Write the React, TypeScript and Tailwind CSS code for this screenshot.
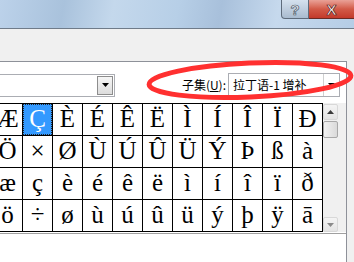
const rows: string[][] = [
  ["Æ", "Ç", "È", "É", "Ê", "Ë", "Ì", "Í", "Î", "Ï", "Ð"],
  ["Ö", "×", "Ø", "Ù", "Ú", "Û", "Ü", "Ý", "Þ", "ß", "à"],
  ["æ", "ç", "è", "é", "ê", "ë", "ì", "í", "î", "ï", "ð"],
  ["ö", "÷", "ø", "ù", "ú", "û", "ü", "ý", "þ", "ÿ", "ā"],
];

const DropArrow = () => (
  <svg width="7" height="4" viewBox="0 0 7 4">
    <path d="M0 0h7L3.5 4z" fill="#000" />
  </svg>
);

const SymbolGrid = () => (
  <div className="flex -ml-[8px] border-b border-[#a0a0a0] pb-px">
    <div className="border-t border-l border-black">
      {rows.map((row, r) => (
        <div key={r} className="flex">
          {row.map((ch, c) => {
            const selected = r === 0 && c === 1;
            return (
              <div
                key={c}
                className="w-[30px] h-[32px] border-r border-b border-black flex items-center justify-center pb-[2px]"
              >
                {selected ? (
                  <div className="w-[29px] h-[31px] -mb-[2px] pb-[2px] bg-[#3399ff] border border-dotted border-[#222] flex items-center justify-center text-white">
                    {ch}
                  </div>
                ) : (
                  ch
                )}
              </div>
            );
          })}
        </div>
      ))}
    </div>
    {/* scrollbar */}
    <div className="w-[15px] flex flex-col bg-[#f0f0f0]">
      <div className="h-[16px] mt-px flex items-center justify-center bg-gradient-to-b from-[#f4f4f4] to-[#e4e4e4] border border-[#d8d8d8] rounded-[2px]">
        <svg width="7" height="4" viewBox="0 0 7 4">
          <path d="M3.5 0L7 4H0z" fill="#3a3a3a" />
        </svg>
      </div>
      <div className="h-[17px] mt-px bg-gradient-to-r from-[#f2f2f2] to-[#dadada] border border-[#a8a8a8] rounded-[2px]" />
      <div className="flex-1" />
      <div className="h-[15px] flex items-center justify-center bg-gradient-to-b from-[#f4f4f4] to-[#e4e4e4] border border-[#d8d8d8] rounded-[2px]">
        <svg width="7" height="4" viewBox="0 0 7 4">
          <path d="M0 0h7L3.5 4z" fill="#8a8a8a" />
        </svg>
      </div>
    </div>
    <div className="w-[8px] bg-[#f0f0f0]" />
  </div>
);

export default function App() {
  return (
    <div className="relative w-[354px] h-[262px] overflow-hidden bg-[#f0f0f0] font-['Liberation_Sans',sans-serif]">
      {/* title bar */}
      <div className="h-[29px] border-b border-[#6f7b89] bg-[linear-gradient(100deg,#bcd2ea_0%,#a9c2dc_18%,#c4d8ec_32%,#b7cfe7_50%,#a8c0db_62%,#c6d9ed_78%,#b5cde6_100%)] flex justify-end items-start">
        <div className="w-[28px] h-[19px] border border-t-0 border-[#5e6b7b] rounded-bl-[4px] bg-gradient-to-b from-[#d5e1ee] to-[#a9bbcf] flex items-center justify-center">
          <span className="text-[15px] leading-none font-bold text-[#e8eef5] [-webkit-text-stroke:0.7px_#4b5866]">?</span>
        </div>
        <div className="w-[45px] h-[19px] border-b border-[#6a2a24] bg-gradient-to-b from-[#e9a197] via-[#d25a48] to-[#c3392a] flex items-center justify-center">
          <span className="text-[15px] leading-none font-bold text-white [-webkit-text-stroke:0.7px_#5a2018]">X</span>
        </div>
      </div>

      {/* tab page */}
      <div className="mt-[32px] w-[347px] h-[201px] bg-white border-t border-r border-[#8e9199]">
        <div className="flex items-center mt-[11px] pr-[6px]">
          <div className="w-[115px] h-[23px] border border-l-0 border-[#abadb3] bg-white flex justify-end p-px">
            <div className="w-[16px] border border-[#8d8d8d] bg-gradient-to-b from-[#f6f6f6] to-[#dcdcdc] flex items-center justify-center">
              <DropArrow />
            </div>
          </div>
          <div className="ml-auto mr-[2px] text-[12px] text-black font-['Noto_Sans_CJK_SC',sans-serif]">
            子集(<span className="underline">U</span>):
          </div>
          <div className="w-[112px] h-[24px] border border-[#abadb3] bg-white flex items-center">
            <span className="pl-[4px] flex-1 text-[12px] text-black font-['Noto_Sans_CJK_SC',sans-serif]">
              拉丁语-1 增补
            </span>
            <div className="w-[16px] h-full border-l border-[#d0d0d0] flex items-center justify-center">
              <DropArrow />
            </div>
          </div>
        </div>
        <div className="mt-[6px] font-['Liberation_Serif',serif] text-[25px] leading-none text-black">
          <SymbolGrid />
        </div>
      </div>

      {/* annotation */}
      <svg className="absolute left-0 top-0 pointer-events-none" width="354" height="262">
        <ellipse
          cx="250"
          cy="80"
          rx="101"
          ry="17"
          transform="rotate(-2.5 250 80)"
          fill="none"
          stroke="#ff3030"
          strokeWidth="5"
        />
      </svg>
    </div>
  );
}
